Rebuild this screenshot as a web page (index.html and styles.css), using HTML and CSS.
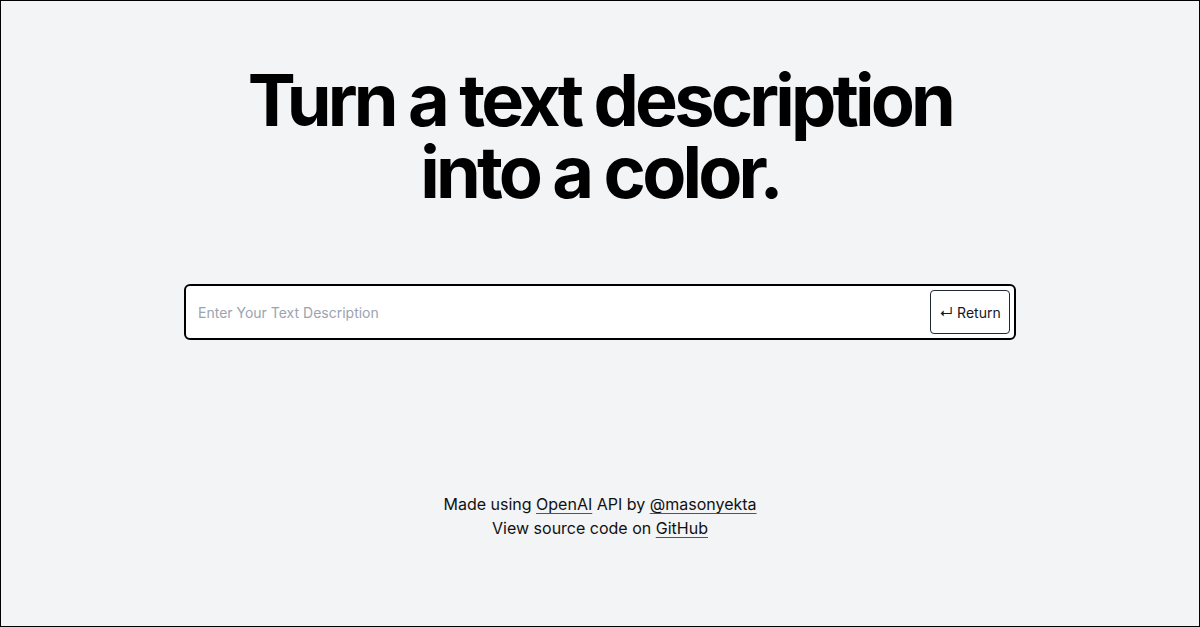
FILE: index.html
```html
<!DOCTYPE html>
<html>
<head>
<meta charset="utf-8">
<link rel="stylesheet" href="styles.css">
</head>
<body>
<main class="page">
  <h1 class="title">Turn a text description<br>into a color.</h1>
  <form class="search">
    <input class="search-input" type="text" placeholder="Enter Your Text Description">
    <button class="search-btn" type="button"><span class="arrow">↵</span> Return</button>
  </form>
  <footer class="footer">
    <p>Made using <a href="#">OpenAI</a> API by <a href="#">@masonyekta</a></p>
    <p>View source code on <a href="#">GitHub</a></p>
  </footer>
</main>
</body>
</html>
```
FILE: styles.css
```css
* { box-sizing: border-box; }
html, body { margin: 0; padding: 0; }
body {
  background: #f3f4f6;
  font-family: Inter, "Liberation Sans", sans-serif;
  color: #000;
}
.page {
  height: 627px;
  border: 1px solid #000;
  display: flex;
  flex-direction: column;
  align-items: center;
  padding-top: 63px;
}
.title {
  margin: 0;
  font-size: 72px;
  line-height: 72px;
  font-weight: 700;
  letter-spacing: -0.053em;
  text-align: center;
}
.search {
  margin-top: 76px;
  width: 832px;
  height: 56px;
  border: 2px solid #000;
  border-radius: 6px;
  background: #fff;
  display: flex;
  align-items: center;
  padding: 0 4px 0 12px;
}
.search-input {
  flex: 1;
  border: 0;
  outline: none;
  background: transparent;
  font-family: inherit;
  font-size: 14px;
  color: #000;
  padding: 0;
}
.search-input::placeholder { color: #9ca3af; }
.search-btn {
  width: 80px;
  height: 44px;
  border: 1px solid #1f2937;
  border-radius: 4px;
  background: #fff;
  font-family: inherit;
  font-size: 14px;
  color: #111827;
  padding: 0;
}
.footer {
  margin-top: 152px;
  text-align: center;
  font-size: 16px;
  line-height: 24px;
  color: #111;
}
.footer p { margin: 0; }
.footer a {
  color: #111;
  text-decoration: underline;
  text-decoration-color: #555;
  text-underline-offset: 3px;
}
```
